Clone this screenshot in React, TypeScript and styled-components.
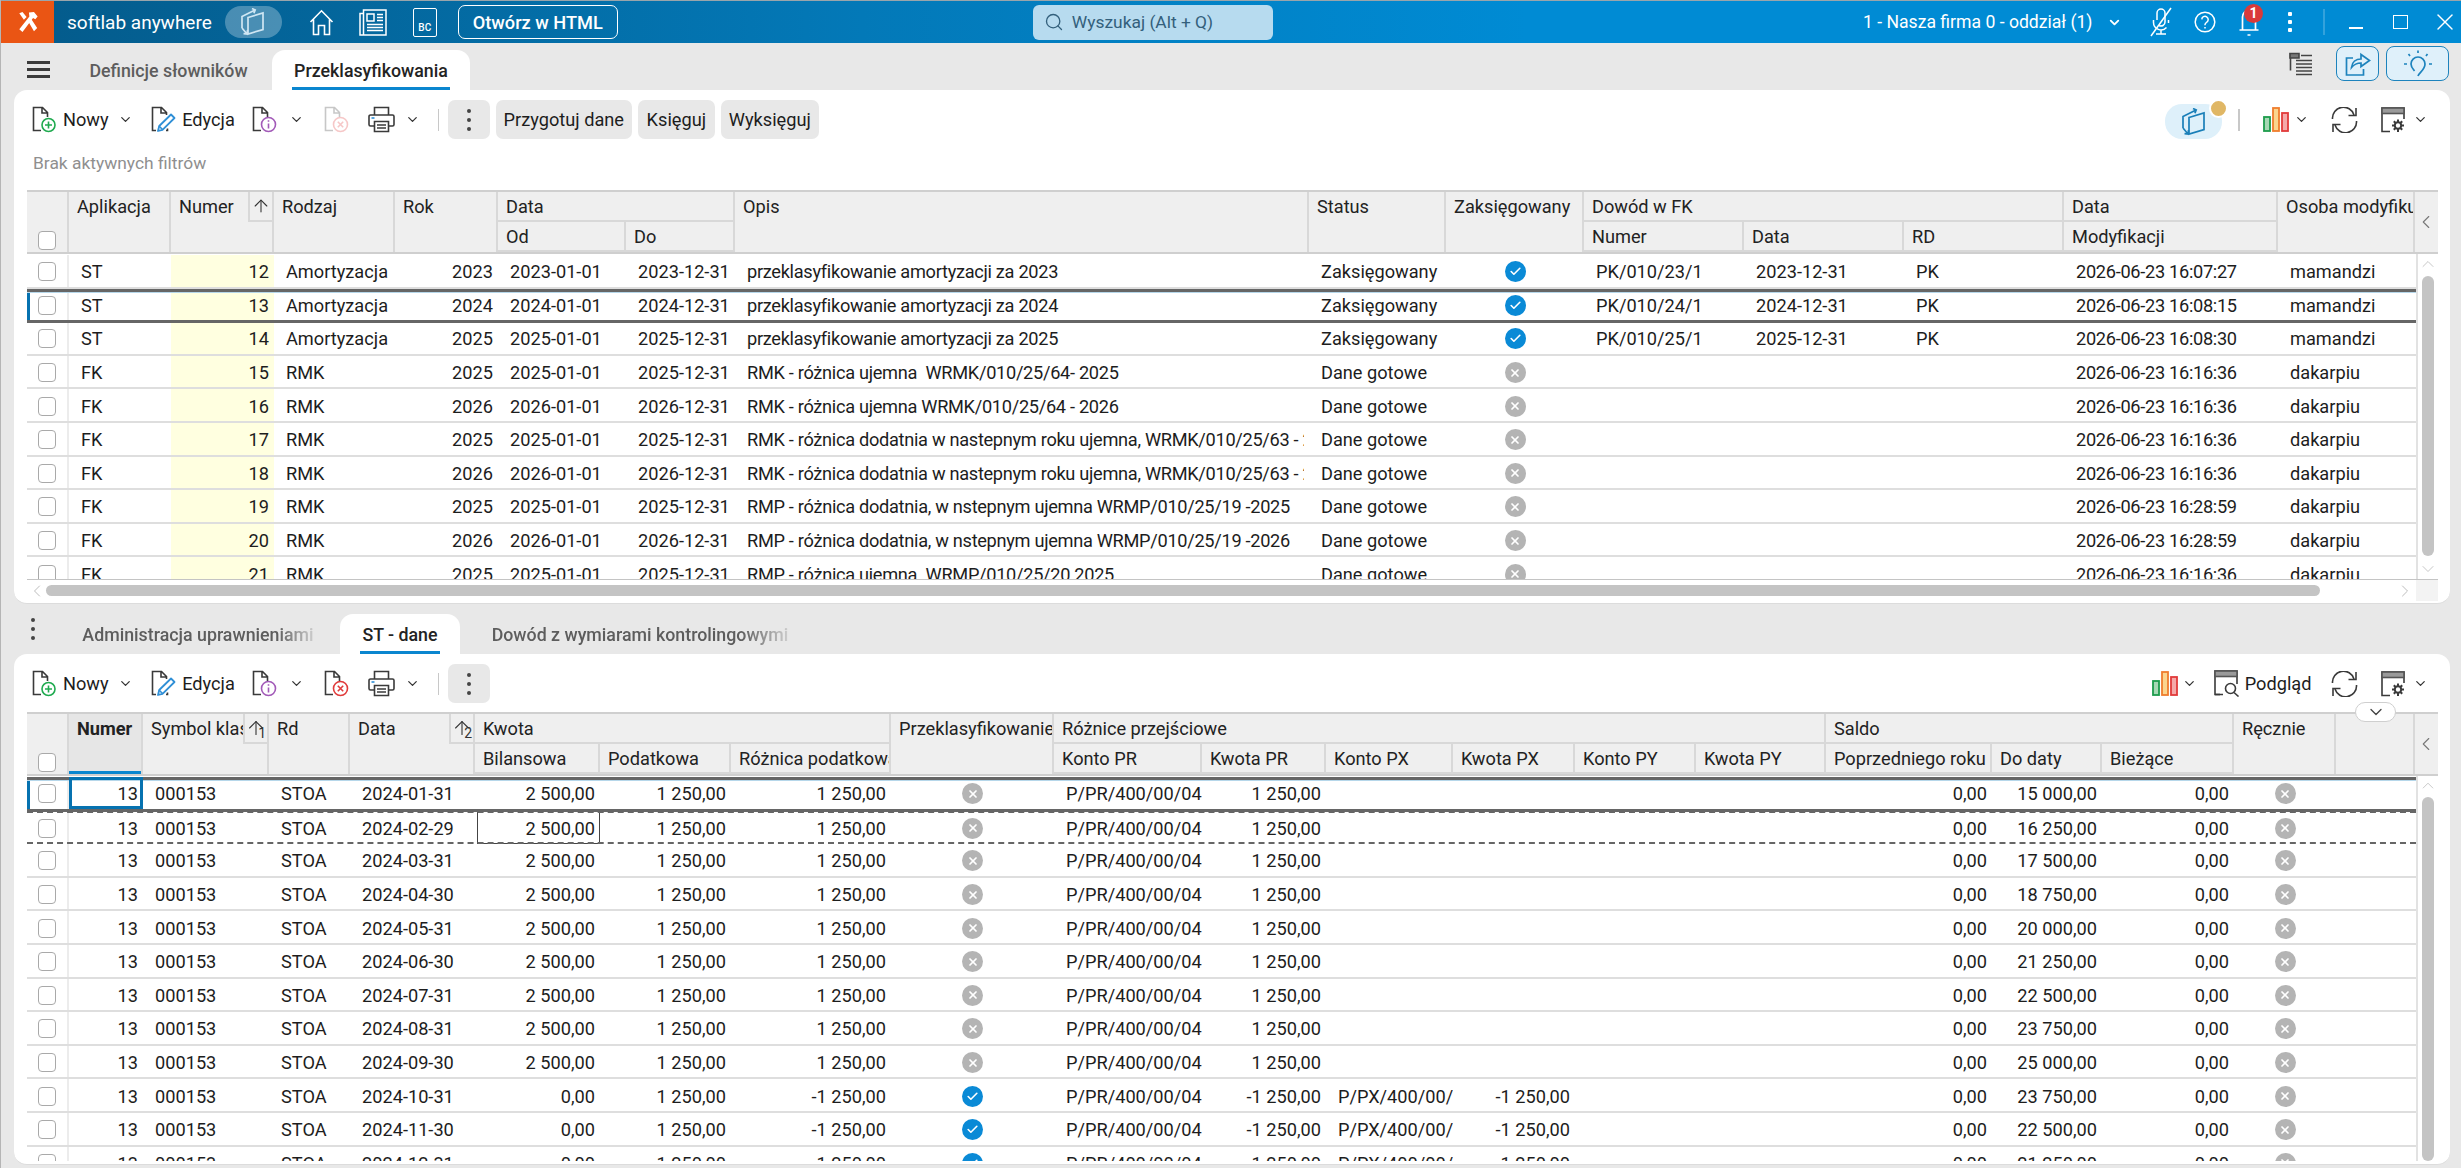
import React from "react";
import styled, { createGlobalStyle } from "styled-components";
import { ChevronDown, ChevronLeft, ChevronRight, ChevronUp, ArrowUp, Check, Search, X } from "lucide-react";

const GlobalStyle = createGlobalStyle`
  html, body { margin: 0; padding: 0; background: #e8e8e8; }
  * { box-sizing: border-box; }
  body { font-family: Roboto, "Liberation Sans", sans-serif; color: #1d1d1d; }
`;

const DARK = "#3a3a3a";

/* ---------- icons ---------- */

const DocPage = ({ color = DARK }: { color?: string }) => (
  <path d="M9 24.5H1.5V1.5H10.5L15.5 6.5V11M10 1.5V7H15.5" fill="none" stroke={color} strokeWidth="1.6" />
);

const DocNew = () => (
  <svg width="26" height="27" viewBox="0 0 26 27">
    <DocPage />
    <circle cx="16.5" cy="19" r="6.5" fill="#fff" stroke="#1faa4f" strokeWidth="1.6" />
    <path d="M16.5 15.5v7M13 19h7" stroke="#1faa4f" strokeWidth="1.6" />
  </svg>
);

const DocEdit = () => (
  <svg width="26" height="27" viewBox="0 0 26 27">
    <path d="M5 24.5H1.5V1.5H10.5L15.5 6.5V9M10 1.5V7H15.5M15 24.5h1.5v-2" fill="none" stroke={DARK} strokeWidth="1.6" />
    <path d="M7 25l1.2-5L20 8.5l3.5 3.5L11.5 23.8z" fill="#fff" stroke="#2f8fd6" strokeWidth="1.8" strokeLinejoin="round" />
    <path d="M8 20l3.5 3.5" stroke="#2f8fd6" strokeWidth="1.6" />
  </svg>
);

const DocInfo = () => (
  <svg width="26" height="27" viewBox="0 0 26 27">
    <DocPage />
    <circle cx="16.5" cy="18.5" r="7" fill="#fff" stroke="#a25ab8" strokeWidth="1.6" />
    <path d="M16.5 17.5v5M16.5 14.2v1.6" stroke="#a25ab8" strokeWidth="1.6" />
  </svg>
);

const DocRemove = ({ off }: { off?: boolean }) => (
  <svg width="26" height="27" viewBox="0 0 26 27" opacity={off ? 0.28 : 1}>
    <DocPage />
    <circle cx="16.5" cy="18.5" r="7" fill="#fff" stroke="#e03b3b" strokeWidth="1.6" />
    <path d="M13.8 15.8l5.4 5.4M19.2 15.8l-5.4 5.4" stroke="#e03b3b" strokeWidth="1.6" />
  </svg>
);

const Printer = () => (
  <svg width="27" height="27" viewBox="0 0 27 27" fill="none" stroke={DARK} strokeWidth="1.6">
    <path d="M6.5 9V1.5h14V9" />
    <path d="M6 20H2.5a1.5 1.5 0 0 1-1.5-1.5V10.5A1.5 1.5 0 0 1 2.5 9h22a1.5 1.5 0 0 1 1.5 1.5v8a1.5 1.5 0 0 1-1.5 1.5H21" />
    <path d="M6.5 15.5h14v10h-14zM9 19h9M9 22h9" />
    <path d="M3.5 12h3" stroke="#2f8fd6" />
  </svg>
);

const Sheets = ({ color, size = 28 }: { color: string; size?: number }) => (
  <svg width={size} height={size} viewBox="0 0 28 28" fill="none" stroke={color} strokeWidth="1.7">
    <path d="M9 9.5L24 5v16.5L9 26z" />
    <path d="M3 20V8.5L16 2M13 0.5l3.2 1.5-1.3 3.3" />
    <path d="M3 20l5 6M8.5 22l-.4 4-3.6-.3" />
  </svg>
);

const Home = () => (
  <svg width="25" height="27" viewBox="0 0 25 27" fill="none" stroke="#fff" strokeWidth="1.6">
    <path d="M1.5 13L12.5 1.8 23.5 13M4.5 10.5V25.5H9.5V16.5H15.5V25.5H20.5V10.5" />
  </svg>
);

const News = () => (
  <svg width="28" height="27" viewBox="0 0 28 27" fill="none" stroke="#fff" strokeWidth="1.5">
    <path d="M4.5 1h22.5v25H4.5zM4.5 4.5H1v21.5h3.5" />
    <path d="M8 5h7v7H8zM18 5.5h6M18 8.5h6M18 11.5h6M8 15.5h16M8 18.5h16M8 21.5h16" />
  </svg>
);

const Mic = () => (
  <svg width="24" height="30" viewBox="0 0 24 30" fill="none" stroke="#fff" strokeWidth="1.5">
    <path d="M8 13V6a4 4 0 0 1 8 0v9a4 4 0 0 1-6 3.5M4.5 13v2.5a7.5 7.5 0 0 0 13 5M19.5 13v3M12 23v3.5M7 27h10" />
    <path d="M2 29L22 1" />
  </svg>
);

const Help = () => (
  <svg width="22" height="22" viewBox="0 0 22 22" fill="none" stroke="#fff" strokeWidth="1.5">
    <circle cx="11" cy="11" r="9.8" />
    <path d="M7.8 8.4a3.2 3.2 0 1 1 4.8 2.9c-1 .6-1.6 1.2-1.6 2.5v.5M11 16v1.6" />
  </svg>
);

const Bell = () => (
  <svg width="20" height="29" viewBox="0 0 20 29" fill="none" stroke="#fff" strokeWidth="1.7">
    <path d="M3.5 21.5V9a6.5 6.5 0 0 1 13 0v12.5M0.5 22h19M8.5 27h3" />
  </svg>
);

const ListFlag = () => (
  <svg width="24" height="24" viewBox="0 0 24 24" fill="none" stroke="#444" strokeWidth="1.6">
    <path d="M1.5 1v17.5" />
    <path d="M1 1.5h9v4.5H1z" fill="#777" />
    <path d="M12 3.5h11M7 8.5h16M7 12h16M7 15.5h16M7 19h16M7 22.5h16" />
  </svg>
);

const Share = () => (
  <svg width="26" height="24" viewBox="0 0 26 24" fill="none" stroke="#1d83bd" strokeWidth="1.7">
    <path d="M8 6H1.5v17h17v-6" />
    <path d="M6.5 15.5C7 10 11 7 16 7V2.5L24.5 8.5 16 14.5V11c-4 0-7 1.5-9.5 4.5z" />
  </svg>
);

const Bulb = () => (
  <svg width="30" height="28" viewBox="0 0 30 28" fill="none" stroke="#1d83bd" strokeWidth="1.7">
    <path d="M15 26c1-3.5 7-6 7-12a7 7 0 0 0-14 0c0 3 2 5 3.5 7" />
    <path d="M15 0.5V3M5.5 4l1.5 2M24.5 4L23 6M1 14h3M26 14h3" />
  </svg>
);

const Bars = () => (
  <svg width="26" height="25" viewBox="0 0 26 25" strokeWidth="1.8">
    <rect x="1" y="10" width="6" height="14" fill="#a6d8b4" stroke="#1d9c4c" />
    <rect x="10" y="1" width="6" height="23" fill="#fbd58e" stroke="#ef7d2d" />
    <rect x="19" y="6" width="6" height="18" fill="#f5a9a9" stroke="#e23a3a" />
  </svg>
);

const Refresh = () => (
  <svg width="27" height="26" viewBox="0 0 27 26" fill="none" stroke={DARK} strokeWidth="1.6">
    <path d="M1.5 12A11 11 0 0 1 23 8M25.5 14A11 11 0 0 1 4 18" />
    <path d="M25 1v7.5h-7.5M2 25v-7.5h7.5" />
  </svg>
);

const GridGear = () => (
  <svg width="25" height="26" viewBox="0 0 25 26" fill="none" stroke={DARK} strokeWidth="1.6">
    <path d="M9 24.5H1V1h22v11" />
    <rect x="1" y="1" width="22" height="5.5" fill="#9a9a9a" stroke="#555" />
    <circle cx="17" cy="18.5" r="3.2" strokeWidth="2" />
    <path d="M17 12.5v2.5M17 22v3M11 18.5h3M20 18.5h3M12.8 14.3l2 2M19.2 20.7l2 2M21.2 14.3l-2 2M14.8 20.7l-2 2" strokeWidth="2" />
  </svg>
);

const GridLens = () => (
  <svg width="26" height="27" viewBox="0 0 26 27" fill="none" stroke={DARK} strokeWidth="1.6">
    <path d="M9 24.5H1V1h22v13" />
    <rect x="1" y="1" width="22" height="5.5" fill="#9a9a9a" stroke="#555" />
    <path d="M1 24.5h5" />
    <circle cx="16.5" cy="18.5" r="5" />
    <path d="M20 22.5l4.5 4" />
  </svg>
);

const Logo = () => (
  <svg width="22" height="22" viewBox="0 0 24 24" fill="#fff">
    <path d="M2.5 2.5L6 1l4.5 5.5-3 3zM12 11l3-3 7 10.5-3.5 3.5z" />
    <path d="M13 1.5l5.5-.5 4 5-2.5 3-2.5-1.5L6 23l-3.5-3L13.5 6z" />
  </svg>
);

/* ---------- window chrome ---------- */

const Shell = styled.div`
  width: 2461px;
  height: 1168px;
  overflow: hidden;
  display: flex;
  flex-direction: column;
  border-left: 1px solid #b5b5b5;
  background: #e8e8e8;
`;

const TitleBar = styled.header`
  height: 43px;
  flex: none;
  display: flex;
  align-items: center;
  color: #fff;
  border-top: 1px solid #9aa5ab;
  background: linear-gradient(90deg, #045a8a 0%, #0379b8 35%, #008bd4 62%, #008bd4 100%);
`;

const LogoBox = styled.div`
  width: 53px;
  height: 100%;
  flex: none;
  display: flex;
  align-items: center;
  justify-content: center;
  background: #ea5514;
`;

const Brand = styled.span`
  margin-left: 13px;
  font-size: 19px;
  white-space: nowrap;
`;

const ModePill = styled.div`
  width: 57px;
  height: 32px;
  margin-left: 13px;
  border-radius: 16px;
  display: flex;
  align-items: center;
  justify-content: center;
  background: rgba(255, 255, 255, 0.28);
`;

const BarIcon = styled.div<{ $gap: number }>`
  margin-left: ${(p) => p.$gap}px;
  display: flex;
  align-items: center;
  flex: none;
`;

const BcIcon = styled.div`
  width: 24px;
  height: 29px;
  margin-left: 26px;
  border: 1.5px solid #fff;
  border-radius: 2px;
  font-size: 10px;
  font-weight: 500;
  padding-top: 13px;
  text-align: center;
`;

const HtmlButton = styled.button`
  width: 160px;
  height: 34px;
  margin-left: 21px;
  border: 1.5px solid #fff;
  border-radius: 7px;
  background: transparent;
  color: #fff;
  font: 500 18.2px Roboto, sans-serif;
  padding: 0;
`;

const SearchBox = styled.div`
  width: 240px;
  height: 35px;
  margin-left: 415px;
  padding-left: 11px;
  flex: none;
  display: flex;
  align-items: center;
  gap: 8px;
  border-radius: 6px;
  background: #b7dbef;
  color: #33607c;
  font-size: 17.4px;
  white-space: nowrap;
`;

const BarSpacer = styled.div`
  flex: 1;
`;

const CompanyName = styled.span`
  font-size: 17.6px;
  white-space: nowrap;
`;

const BarKebab = styled.div`
  margin-left: 29px;
  display: flex;
  flex-direction: column;
  gap: 4px;
  i {
    width: 4px;
    height: 4px;
    background: #fff;
    border-radius: 1px;
  }
`;

const BarDivider = styled.div`
  width: 2px;
  height: 26px;
  margin-left: 31px;
  background: rgba(255, 255, 255, 0.2);
`;

const BellBox = styled.div`
  position: relative;
  margin-left: 23px;
  display: flex;
`;

const BellBadge = styled.span`
  position: absolute;
  top: -4px;
  left: 5px;
  width: 19px;
  height: 19px;
  border-radius: 50%;
  background: #d93a3a;
  color: #fff;
  font-size: 14px;
  font-weight: 700;
  line-height: 19px;
  text-align: center;
`;

const MinLine = styled.div`
  width: 14px;
  height: 2px;
  margin: 12px 0 0 24px;
  background: #fff;
`;

const MaxBox = styled.div`
  width: 15px;
  height: 14px;
  margin-left: 30px;
  border: 1.5px solid #fff;
`;

/* ---------- tabs ---------- */

const TabRow = styled.div<{ $h: number }>`
  height: ${(p) => p.$h}px;
  flex: none;
  display: flex;
  align-items: flex-end;
  padding-right: 12px;
`;

const Burger = styled.div`
  width: 23px;
  margin: 0 27px 12px 26px;
  align-self: flex-end;
  display: flex;
  flex-direction: column;
  gap: 4px;
  i {
    height: 3px;
    background: #3b3b3b;
  }
`;

const TabKebab = styled.div`
  margin: 0 44px 14px 30px;
  display: flex;
  flex-direction: column;
  gap: 5px;
  i {
    width: 4px;
    height: 4px;
    border-radius: 50%;
    background: #444;
  }
`;

const Tab = styled.div<{ $active?: boolean; $w: number; $gap?: number }>`
  width: ${(p) => p.$w}px;
  height: 40px;
  margin-left: ${(p) => p.$gap ?? 0}px;
  flex: none;
  position: relative;
  display: flex;
  align-items: center;
  justify-content: center;
  font-size: 17.8px;
  font-weight: 500;
  white-space: nowrap;
  border-radius: 13px 13px 0 0;
  color: ${(p) => (p.$active ? "#232323" : "#5d5d5d")};
  background: ${(p) => (p.$active ? "#fff" : "transparent")};
  ${(p) =>
    p.$active &&
    `&::after {
      content: "";
      position: absolute;
      left: 20px;
      right: 20px;
      bottom: 0;
      height: 3.5px;
      background: #0a86cf;
    }`}
`;

const FadedLabel = styled.span`
  -webkit-mask-image: linear-gradient(90deg, #000 84%, rgba(0, 0, 0, 0.2) 100%);
  mask-image: linear-gradient(90deg, #000 84%, rgba(0, 0, 0, 0.2) 100%);
`;

const TabTools = styled.div`
  margin-left: auto;
  height: 100%;
  padding-bottom: 6px;
  display: flex;
  align-items: center;
  gap: 7px;
`;

const GhostIcon = styled.div`
  margin-right: 16px;
  display: flex;
`;

const BlueButton = styled.div<{ $w: number }>`
  width: ${(p) => p.$w}px;
  height: 35px;
  display: flex;
  align-items: center;
  justify-content: center;
  border: 1.5px solid #1d83bd;
  border-radius: 8px;
  background: #dff0fa;
`;

/* ---------- panels and toolbars ---------- */

const Panel = styled.section<{ $h: number }>`
  height: ${(p) => p.$h}px;
  flex: none;
  margin: 0 11px 0 13px;
  padding: 10px 12px 0 13px;
  border-radius: 13px;
  background: #fff;
  position: relative;
  border-bottom: 1px solid #dcdcdc;
`;

const Toolbar = styled.div`
  height: 39px;
  display: flex;
  align-items: center;
  padding-left: 5px;
`;

const ToolIcon = styled.div<{ $gap?: number }>`
  margin-left: ${(p) => p.$gap ?? 0}px;
  display: flex;
  flex: none;
`;

const ToolLabel = styled.span`
  margin-left: 5px;
  font-size: 18.2px;
  white-space: nowrap;
`;

const ChevronSlot = styled.div<{ $gap: number }>`
  margin-left: ${(p) => p.$gap}px;
  display: flex;
  flex: none;
  color: #333;
`;

const ToolDivider = styled.div<{ $l: number }>`
  width: 1.5px;
  height: 22px;
  margin: 0 8.5px 0 ${(p) => p.$l}px;
  background: #c8c8c8;
  flex: none;
`;

const GreyButton = styled.div<{ $w: number }>`
  width: ${(p) => p.$w}px;
  height: 39px;
  margin-right: 6px;
  flex: none;
  display: flex;
  align-items: center;
  justify-content: center;
  gap: 5px;
  font-size: 18.2px;
  white-space: nowrap;
  border-radius: 7px;
  background: #e8e8e8;
`;

const Dots = styled.div`
  display: flex;
  flex-direction: column;
  gap: 5px;
  i {
    width: 4px;
    height: 4px;
    border-radius: 50%;
    background: #444;
  }
`;

const ToolSpacer = styled.div`
  flex: 1;
`;

const ViewPill = styled.div`
  position: relative;
  width: 57px;
  height: 35px;
  margin-top: 4px;
  border-radius: 17px;
  display: flex;
  align-items: center;
  justify-content: center;
  background: #def0fa;
`;

const PillDot = styled.span`
  position: absolute;
  top: -5px;
  right: -6px;
  width: 19px;
  height: 19px;
  border: 2.5px solid #fff;
  border-radius: 50%;
  background: #e0b765;
`;

const FilterNote = styled.div`
  height: 51px;
  padding: 0 0 3px 6px;
  display: flex;
  align-items: center;
  color: #8f8f8f;
  font-size: 17.4px;
`;

/* ---------- data grid ---------- */

const Grid = styled.div<{ $top?: number }>`
  margin-top: ${(p) => p.$top ?? 0}px;
  position: relative;
`;

const HeadGrid = styled.div<{ $cols: string }>`
  display: grid;
  grid-template-columns: ${(p) => p.$cols} 22px;
  grid-template-rows: 30px 30px;
  border-top: 2px solid #cfcfcf;
  border-bottom: 2px solid #cfcfcf;
  background: #efefef;
`;

const HeadCell = styled.div<{ $c?: number; $r?: number; $key?: boolean }>`
  grid-column: span ${(p) => p.$c ?? 1};
  grid-row: span ${(p) => p.$r ?? 1};
  position: relative;
  padding: 0 0 0 8px;
  line-height: 30px;
  font-size: 18.2px;
  overflow: hidden;
  white-space: nowrap;
  color: #222;
  border-right: 2px solid #d8d8d8;
  border-bottom: ${(p) => (p.$r === 2 ? "0" : "2px solid #d8d8d8")};
  ${(p) => p.$key && `font-weight: 700; background: #e6e6e6; box-shadow: inset 0 -3px #0a86cf;`}
`;

const CheckHead = styled(HeadCell)`
  padding: 0;
  display: flex;
  align-items: flex-end;
  justify-content: center;
  padding-bottom: 2px;
`;

const ChevronHead = styled(HeadCell)`
  padding: 0;
  border-right: 0;
  display: flex;
  align-items: center;
  justify-content: center;
  color: #777;
`;

const SortTag = styled.span`
  position: absolute;
  top: 0;
  right: 0;
  width: 24px;
  height: 30px;
  display: flex;
  align-items: center;
  justify-content: center;
  border-left: 2px solid #d8d8d8;
  border-bottom: 2px solid #d8d8d8;
  background: #efefef;
  color: #333;
  font-weight: 400;
`;

const SortNumber = styled.span`
  position: absolute;
  right: 1px;
  bottom: -6px;
  font-size: 14px;
`;

const BodyWrap = styled.div<{ $h: number }>`
  height: ${(p) => p.$h}px;
  display: flex;
  overflow: hidden;
`;

const Rows = styled.div`
  flex: 1;
  min-width: 0;
  overflow: hidden;
  padding-top: 1px;
`;

const Row = styled.div<{ $cols: string; $selected?: boolean; $dashed?: boolean }>`
  display: grid;
  grid-template-columns: ${(p) => p.$cols};
  height: 33.6px;
  position: relative;
  border-bottom: 2px solid #dedede;
  background: #fff;
  ${(p) =>
    p.$selected &&
    `border-bottom-color: transparent;
    &::after {
      content: "";
      position: absolute;
      left: 0;
      right: 0;
      top: 0;
      bottom: -3px;
      border-top: 3px solid #666;
      border-bottom: 3px solid #666;
      box-shadow: inset 0 1px #b6d7ea;
      pointer-events: none;
      z-index: 2;
    }`}
  ${(p) =>
    p.$dashed &&
    `border-bottom: 0;
    &::after {
      content: "";
      position: absolute;
      left: 0;
      right: 0;
      top: 0;
      bottom: 0;
      border-top: 2px dashed #666;
      border-bottom: 2px dashed #666;
      pointer-events: none;
      z-index: 3;
    }`}
`;

const Cell = styled.div<{ $right?: boolean; $mark?: boolean; $focus?: boolean; $box?: boolean; $tight?: boolean }>`
  min-width: 0;
  overflow: hidden;
  white-space: nowrap;
  display: flex;
  align-items: center;
  padding: ${(p) => (p.$right ? "2px 5px 0 0" : "2px 0 0 12px")};
  justify-content: ${(p) => (p.$right ? "flex-end" : "flex-start")};
  font-size: 18.2px;
  letter-spacing: ${(p) => (p.$tight ? "-0.3px" : "0")};
  margin-right: ${(p) => (p.$tight ? "5px" : "0")};
  color: #1d1d1d;
  background: ${(p) => (p.$mark ? "#ffffe0" : "transparent")};
  ${(p) => p.$focus && `border: 3.5px solid #0672b0; z-index: 4; position: relative; padding-right: 2px;`}
  ${(p) => p.$box && `border: 1px solid #444; margin-left: 2px; padding-right: 4px;`}
`;

const CheckCell = styled.div<{ $active?: boolean }>`
  display: flex;
  align-items: center;
  justify-content: center;
  padding-top: 2px;
  border-right: 2px solid #ececec;
  box-shadow: ${(p) => (p.$active ? "inset 3px 0 #0672b0" : "none")};
`;

const Box = styled.span`
  width: 18px;
  height: 19px;
  display: block;
  border: 1.5px solid #a9a9a9;
  border-radius: 4px;
  background: #fff;
`;

const StateCell = styled.div`
  display: flex;
  align-items: center;
  justify-content: center;
  padding-top: 2px;
`;

const StateDot = styled.span<{ $on?: boolean }>`
  width: 21px;
  height: 21px;
  border-radius: 50%;
  display: flex;
  align-items: center;
  justify-content: center;
  color: #fff;
  background: ${(p) => (p.$on ? "#0a8ad6" : "#b4b4b4")};
`;

const VScroll = styled.div`
  width: 22px;
  flex: none;
  position: relative;
  display: flex;
  flex-direction: column;
  align-items: center;
  color: #c2c2c2;
  border-left: 2px solid #e2e2e2;
`;

const ScrollThumb = styled.div<{ $h: number }>`
  width: 12px;
  height: ${(p) => p.$h}px;
  margin-top: 2px;
  border-radius: 6px;
  background: #c4c4c4;
`;

const ScrollEnd = styled.div`
  margin-top: auto;
  display: flex;
`;

const HScroll = styled.div`
  height: 22px;
  display: flex;
  align-items: center;
  border-top: 1.5px solid #c4c4c4;
  color: #bdbdbd;
`;

const HThumb = styled.div`
  width: 2274px;
  height: 11px;
  margin-left: -1px;
  border-radius: 6px;
  background: #c4c4c4;
`;

const HEnd = styled.div`
  margin-left: auto;
  display: flex;
  align-items: center;
  height: 100%;
`;

const Corner = styled.div`
  width: 22px;
  height: 100%;
  margin-left: 1px;
  background: #f3f3f3;
`;

const CollapseTab = styled.div`
  position: absolute;
  top: -10px;
  right: 42px;
  width: 41px;
  height: 20px;
  border: 1.5px solid #cfcfcf;
  border-radius: 10px;
  background: #fff;
  display: flex;
  align-items: center;
  justify-content: center;
  color: #444;
  z-index: 5;
`;

/* ---------- data ---------- */

const TOP_COLS = "42px 102px 103px 121px 103px 128px 109px 574px 137px 138px 160px 160px 160px 214px 137px";
const LOW_COLS =
  "42px 74px 126px 81px 125px 125px 131px 160px 163px 148px 124px 127px 122px 121px 130px 166px 110px 132px 102px 79px";

const rmk1 = "RMK - różnica dodatnia w nastepnym roku ujemna, WRMK/010/25/63 - 2025";
const rmk2 = "RMK - różnica dodatnia w nastepnym roku ujemna, WRMK/010/25/63 - 2026";
const rmp = "RMP - różnica dodatnia, w nstepnym ujemna WRMP/010/25/19 -";

type TopRow = [string, number, string, number, string, boolean, string, string, string];

const y = (n: number) => [`${n}-01-01`, `${n}-12-31`];

const topRows: TopRow[] = [
  ["ST", 12, "Amortyzacja", 2023, "przeklasyfikowanie amortyzacji za 2023", true, "PK/010/23/1", "16:07:27", "mamandzi"],
  ["ST", 13, "Amortyzacja", 2024, "przeklasyfikowanie amortyzacji za 2024", true, "PK/010/24/1", "16:08:15", "mamandzi"],
  ["ST", 14, "Amortyzacja", 2025, "przeklasyfikowanie amortyzacji za 2025", true, "PK/010/25/1", "16:08:30", "mamandzi"],
  ["FK", 15, "RMK", 2025, "RMK - różnica ujemna\u00a0 WRMK/010/25/64- 2025", false, "", "16:16:36", "dakarpiu"],
  ["FK", 16, "RMK", 2026, "RMK - różnica ujemna WRMK/010/25/64 - 2026", false, "", "16:16:36", "dakarpiu"],
  ["FK", 17, "RMK", 2025, rmk1, false, "", "16:16:36", "dakarpiu"],
  ["FK", 18, "RMK", 2026, rmk2, false, "", "16:16:36", "dakarpiu"],
  ["FK", 19, "RMK", 2025, `${rmp}2025`, false, "", "16:28:59", "dakarpiu"],
  ["FK", 20, "RMK", 2026, `${rmp}2026`, false, "", "16:28:59", "dakarpiu"],
  ["FK", 21, "RMK", 2025, "RMP - różnica ujemna\u00a0 WRMP/010/25/20 2025", false, "", "16:16:36", "dakarpiu"],
];

type LowRow = {
  date: string;
  toDate: string;
  book: string;
  diff: string;
  moved: boolean;
  pr: string;
  pxAccount: string;
  px: string;
};

const plain = { book: "2 500,00", diff: "1 250,00", moved: false, pr: "1 250,00", pxAccount: "", px: "" };
const moved = { book: "0,00", diff: "-1 250,00", moved: true, pr: "-1 250,00", pxAccount: "P/PX/400/00/", px: "-1 250,00" };

const lowRows: LowRow[] = [
  { date: "2024-01-31", toDate: "15 000,00", ...plain },
  { date: "2024-02-29", toDate: "16 250,00", ...plain },
  { date: "2024-03-31", toDate: "17 500,00", ...plain },
  { date: "2024-04-30", toDate: "18 750,00", ...plain },
  { date: "2024-05-31", toDate: "20 000,00", ...plain },
  { date: "2024-06-30", toDate: "21 250,00", ...plain },
  { date: "2024-07-31", toDate: "22 500,00", ...plain },
  { date: "2024-08-31", toDate: "23 750,00", ...plain },
  { date: "2024-09-30", toDate: "25 000,00", ...plain },
  { date: "2024-10-31", toDate: "23 750,00", ...moved },
  { date: "2024-11-30", toDate: "22 500,00", ...moved },
  { date: "2024-12-31", toDate: "21 250,00", ...moved },
];

const Chev = ({ gap, size = 15 }: { gap: number; size?: number }) => (
  <ChevronSlot $gap={gap}>
    <ChevronDown size={size} strokeWidth={2} />
  </ChevronSlot>
);

const State = ({ on }: { on: boolean }) => (
  <StateCell>
    <StateDot $on={on}>{on ? <Check size={13} strokeWidth={3} /> : <X size={12} strokeWidth={3.4} />}</StateDot>
  </StateCell>
);

const Kebab = () => (
  <Dots>
    <i />
    <i />
    <i />
  </Dots>
);

const DocTools = ({ removeOff }: { removeOff?: boolean }) => (
  <>
    <ToolIcon>
      <DocNew />
    </ToolIcon>
    <ToolLabel>Nowy</ToolLabel>
    <Chev gap={9} />
    <ToolIcon $gap={18.5}>
      <DocEdit />
    </ToolIcon>
    <ToolLabel>Edycja</ToolLabel>
    <ToolIcon $gap={17}>
      <DocInfo />
    </ToolIcon>
    <Chev gap={11} />
    <ToolIcon $gap={20}>
      <DocRemove off={removeOff} />
    </ToolIcon>
    <ToolIcon $gap={18}>
      <Printer />
    </ToolIcon>
    <Chev gap={10} />
    <ToolDivider $l={18} />
    <GreyButton $w={42}>
      <Kebab />
    </GreyButton>
  </>
);

const TopTable = () => (
  <Grid>
    <HeadGrid $cols={TOP_COLS}>
      <CheckHead $r={2}>
        <Box />
      </CheckHead>
      <HeadCell $r={2}>Aplikacja</HeadCell>
      <HeadCell $r={2}>
        Numer
        <SortTag>
          <ArrowUp size={20} strokeWidth={1.3} />
        </SortTag>
      </HeadCell>
      <HeadCell $r={2}>Rodzaj</HeadCell>
      <HeadCell $r={2}>Rok</HeadCell>
      <HeadCell $c={2}>Data</HeadCell>
      <HeadCell $r={2}>Opis</HeadCell>
      <HeadCell $r={2}>Status</HeadCell>
      <HeadCell $r={2}>Zaksięgowany</HeadCell>
      <HeadCell $c={3}>Dowód w FK</HeadCell>
      <HeadCell>Data</HeadCell>
      <HeadCell $r={2}>Osoba modyfikująca</HeadCell>
      <ChevronHead $r={2}>
        <ChevronLeft size={24} strokeWidth={1.2} />
      </ChevronHead>
      <HeadCell>Od</HeadCell>
      <HeadCell>Do</HeadCell>
      <HeadCell>Numer</HeadCell>
      <HeadCell>Data</HeadCell>
      <HeadCell>RD</HeadCell>
      <HeadCell>Modyfikacji</HeadCell>
    </HeadGrid>
    <BodyWrap $h={325}>
      <Rows>
        {topRows.map((r) => {
          const [from, to] = y(r[3]);
          return (
            <Row key={r[1]} $cols={TOP_COLS} $selected={r[1] === 13}>
              <CheckCell $active={r[1] === 13}>
                <Box />
              </CheckCell>
              <Cell>{r[0]}</Cell>
              <Cell $right $mark>
                {r[1]}
              </Cell>
              <Cell>{r[2]}</Cell>
              <Cell $right>{r[3]}</Cell>
              <Cell>{from}</Cell>
              <Cell>{to}</Cell>
              <Cell $tight>{r[4]}</Cell>
              <Cell>{r[5] ? "Zaksięgowany" : "Dane gotowe"}</Cell>
              <State on={r[5]} />
              <Cell>{r[6]}</Cell>
              <Cell>{r[5] ? to : ""}</Cell>
              <Cell>{r[5] ? "PK" : ""}</Cell>
              <Cell $tight>2026-06-23 {r[7]}</Cell>
              <Cell>{r[8]}</Cell>
            </Row>
          );
        })}
      </Rows>
      <VScroll>
        <ChevronUp size={20} strokeWidth={1.1} />
        <ScrollThumb $h={280} />
        <ScrollEnd>
          <ChevronDown size={20} strokeWidth={1.1} />
        </ScrollEnd>
      </VScroll>
    </BodyWrap>
    <HScroll>
      <ChevronLeft size={20} strokeWidth={1.2} />
      <HThumb />
      <HEnd>
        <ChevronRight size={20} strokeWidth={1.2} />
        <Corner />
      </HEnd>
    </HScroll>
  </Grid>
);

const LowTable = () => (
  <Grid $top={9}>
    <CollapseTab>
      <ChevronDown size={20} strokeWidth={1.6} />
    </CollapseTab>
    <HeadGrid $cols={LOW_COLS}>
      <CheckHead $r={2}>
        <Box />
      </CheckHead>
      <HeadCell $r={2} $key>
        Numer
      </HeadCell>
      <HeadCell $r={2}>
        Symbol klasyfikacji
        <SortTag>
          <ArrowUp size={22} strokeWidth={1.2} />
          <SortNumber>1</SortNumber>
        </SortTag>
      </HeadCell>
      <HeadCell $r={2}>Rd</HeadCell>
      <HeadCell $r={2}>
        Data
        <SortTag>
          <ArrowUp size={22} strokeWidth={1.2} />
          <SortNumber>2</SortNumber>
        </SortTag>
      </HeadCell>
      <HeadCell $c={3}>Kwota</HeadCell>
      <HeadCell $r={2}>Przeklasyfikowanie</HeadCell>
      <HeadCell $c={6}>Różnice przejściowe</HeadCell>
      <HeadCell $c={3}>Saldo</HeadCell>
      <HeadCell $r={2}>Ręcznie</HeadCell>
      <HeadCell $r={2} />
      <ChevronHead $r={2}>
        <ChevronLeft size={24} strokeWidth={1.2} />
      </ChevronHead>
      <HeadCell>Bilansowa</HeadCell>
      <HeadCell>Podatkowa</HeadCell>
      <HeadCell>Różnica podatkowa</HeadCell>
      <HeadCell>Konto PR</HeadCell>
      <HeadCell>Kwota PR</HeadCell>
      <HeadCell>Konto PX</HeadCell>
      <HeadCell>Kwota PX</HeadCell>
      <HeadCell>Konto PY</HeadCell>
      <HeadCell>Kwota PY</HeadCell>
      <HeadCell>Poprzedniego roku</HeadCell>
      <HeadCell>Do daty</HeadCell>
      <HeadCell>Bieżące</HeadCell>
    </HeadGrid>
    <BodyWrap $h={385}>
      <Rows>
        {lowRows.map((r, i) => (
          <Row key={r.date} $cols={LOW_COLS} $selected={i === 0} $dashed={i === 1}>
            <CheckCell $active={i === 0}>
              <Box />
            </CheckCell>
            <Cell $right $focus={i === 0}>
              13
            </Cell>
            <Cell>000153</Cell>
            <Cell>STOA</Cell>
            <Cell>{r.date}</Cell>
            <Cell $right $box={i === 1}>
              {r.book}
            </Cell>
            <Cell $right>1 250,00</Cell>
            <Cell $right>{r.diff}</Cell>
            <State on={r.moved} />
            <Cell>P/PR/400/00/04</Cell>
            <Cell $right>{r.pr}</Cell>
            <Cell>{r.pxAccount}</Cell>
            <Cell $right>{r.px}</Cell>
            <Cell />
            <Cell />
            <Cell $right>0,00</Cell>
            <Cell $right>{r.toDate}</Cell>
            <Cell $right>0,00</Cell>
            <State on={false} />
            <Cell />
          </Row>
        ))}
      </Rows>
      <VScroll>
        <ChevronUp size={20} strokeWidth={1.1} />
        <ScrollThumb $h={380} />
      </VScroll>
    </BodyWrap>
  </Grid>
);

const App = () => (
  <>
    <GlobalStyle />
    <Shell>
      <TitleBar>
        <LogoBox>
          <Logo />
        </LogoBox>
        <Brand>softlab anywhere</Brand>
        <ModePill>
          <Sheets color="#cfe6f3" />
        </ModePill>
        <BarIcon $gap={27}>
          <Home />
        </BarIcon>
        <BarIcon $gap={25}>
          <News />
        </BarIcon>
        <BcIcon>BC</BcIcon>
        <HtmlButton>Otwórz w HTML</HtmlButton>
        <SearchBox>
          <Search size={20} strokeWidth={1.6} />
          Wyszukaj (Alt + Q)
        </SearchBox>
        <BarSpacer />
        <CompanyName>1 - Nasza firma 0 - oddział (1)</CompanyName>
        <BarIcon $gap={14.5}>
          <ChevronDown size={15} strokeWidth={3} />
        </BarIcon>
        <BarIcon $gap={27}>
          <Mic />
        </BarIcon>
        <BarIcon $gap={21}>
          <Help />
        </BarIcon>
        <BellBox>
          <Bell />
          <BellBadge>1</BellBadge>
        </BellBox>
        <BarKebab>
          <i />
          <i />
          <i />
        </BarKebab>
        <BarDivider />
        <MinLine />
        <MaxBox />
        <BarIcon $gap={23}>
          <X size={28} strokeWidth={1.2} />
        </BarIcon>
        <BarIcon $gap={2} />
      </TitleBar>

      <TabRow $h={47}>
        <Burger>
          <i />
          <i />
          <i />
        </Burger>
        <Tab $w={183}>Definicje słowników</Tab>
        <Tab $active $w={198} $gap={12}>
          Przeklasyfikowania
        </Tab>
        <TabTools>
          <GhostIcon>
            <ListFlag />
          </GhostIcon>
          <BlueButton $w={43}>
            <Share />
          </BlueButton>
          <BlueButton $w={63}>
            <Bulb />
          </BlueButton>
        </TabTools>
      </TabRow>

      <Panel $h={514}>
        <Toolbar>
          <DocTools removeOff />
          <GreyButton $w={136}>Przygotuj dane</GreyButton>
          <GreyButton $w={77}>Księguj</GreyButton>
          <GreyButton $w={98}>Wyksięguj</GreyButton>
          <ToolSpacer />
          <ViewPill>
            <Sheets color="#1a7fb8" />
            <PillDot />
          </ViewPill>
          <ToolDivider $l={16} />
          <ToolIcon $gap={15}>
            <Bars />
          </ToolIcon>
          <Chev gap={4.5} />
          <ToolIcon $gap={22.5}>
            <Refresh />
          </ToolIcon>
          <ToolIcon $gap={23}>
            <GridGear />
          </ToolIcon>
          <Chev gap={6.5} />
          <ToolIcon $gap={10.5} />
        </Toolbar>
        <FilterNote>Brak aktywnych filtrów</FilterNote>
        <TopTable />
      </Panel>

      <TabRow $h={50}>
        <TabKebab>
          <i />
          <i />
          <i />
        </TabKebab>
        <Tab $w={238}>
          <FadedLabel>Administracja uprawnieniami</FadedLabel>
        </Tab>
        <Tab $active $w={120} $gap={23}>
          ST - dane
        </Tab>
        <Tab $w={360}>
          <FadedLabel>Dowód z wymiarami kontrolingowymi</FadedLabel>
        </Tab>
      </TabRow>

      <Panel $h={511}>
        <Toolbar>
          <DocTools />
          <ToolSpacer />
          <ToolIcon>
            <Bars />
          </ToolIcon>
          <Chev gap={4.5} />
          <ToolIcon $gap={16.5}>
            <GridLens />
          </ToolIcon>
          <ToolLabel>Podgląd</ToolLabel>
          <ToolIcon $gap={19.5}>
            <Refresh />
          </ToolIcon>
          <ToolIcon $gap={23}>
            <GridGear />
          </ToolIcon>
          <Chev gap={6.5} />
          <ToolIcon $gap={10.5} />
        </Toolbar>
        <LowTable />
      </Panel>
    </Shell>
  </>
);

export default App;
